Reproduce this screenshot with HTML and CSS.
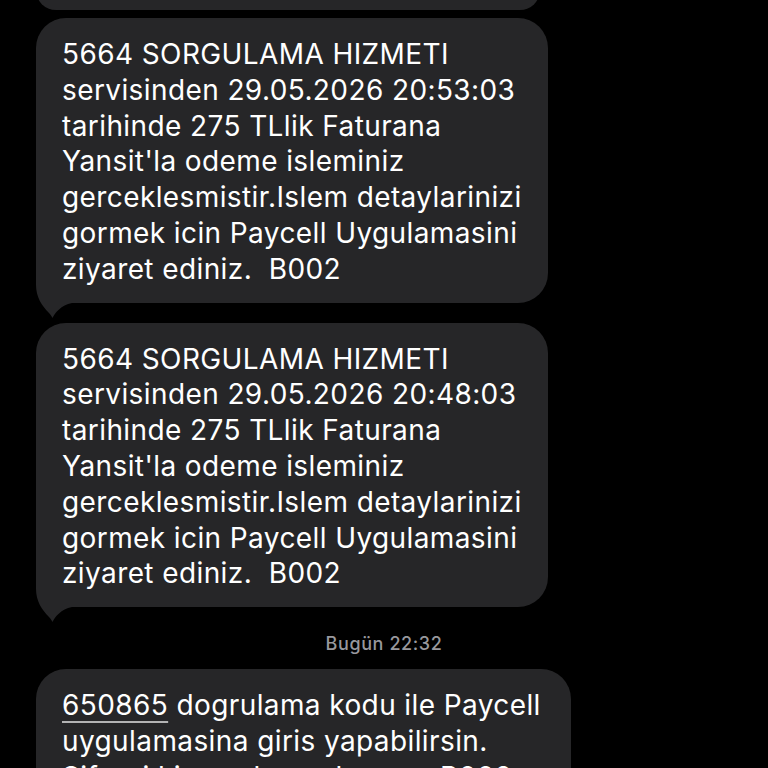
FILE: index.html
```html
<!DOCTYPE html>
<html lang="tr">
<head>
<meta charset="utf-8">
<title>Mesajlar</title>
<link rel="stylesheet" href="styles.css">
</head>
<body>
<main class="thread">
  <div class="bubble partial"></div>

  <div class="bubble first">
    <svg class="tail" width="40" height="46" viewBox="0 0 40 46"><path d="M0 0 L0 12 C0 24 6 33 13 40 C15 42 16 44 16.5 45 C19 40 25 32 36 30 L40 30 L40 0 Z" fill="#262628"/></svg>
    <p class="text">5664 SORGULAMA HIZMETI<br>servisinden 29.05.2026 20:53:03<br>tarihinde 275 TLlik Faturana<br>Yansit'la odeme isleminiz<br>gerceklesmistir.Islem detaylarinizi<br>gormek icin Paycell Uygulamasini<br>ziyaret ediniz.&nbsp; B002</p>
  </div>

  <div class="bubble second">
    <svg class="tail" width="40" height="46" viewBox="0 0 40 46"><path d="M0 0 L0 12 C0 24 6 33 13 40 C15 42 16 44 16.5 45 C19 40 25 32 36 30 L40 30 L40 0 Z" fill="#262628"/></svg>
    <p class="text">5664 SORGULAMA HIZMETI<br>servisinden 29.05.2026 20:48:03<br>tarihinde 275 TLlik Faturana<br>Yansit'la odeme isleminiz<br>gerceklesmistir.Islem detaylarinizi<br>gormek icin Paycell Uygulamasini<br>ziyaret ediniz.&nbsp; B002</p>
  </div>

  <div class="stamp">Bugün 22:32</div>

  <div class="bubble third">
    <p class="text"><span class="code">650865</span> dogrulama kodu ile Paycell<br>uygulamasina giris yapabilirsin.<br>Sifreni kimseyle paylasma.&nbsp; B002</p>
  </div>
</main>
</body>
</html>
```

FILE: styles.css
```css
html, body {
  margin: 0;
  padding: 0;
  background: #000;
  height: 768px;
  overflow: hidden;
}

.thread {
  display: flex;
  flex-direction: column;
  align-items: flex-start;
  font-family: Inter, "Noto Sans", "Liberation Sans", sans-serif;
}

.bubble {
  position: relative;
  margin-left: 36px;
  background: #262628;
  color: #fff;
  border-radius: 30px;
  padding: 19px 26px 15px 26px;
}

.partial {
  width: 504px;
  height: 40px;
  padding: 0;
  margin-top: -30px;
}

.first {
  margin-top: 8px;
}

.second {
  margin-top: 20px;
}

.third {
  padding-right: 30px;
}

.text {
  position: relative;
  margin: 0;
  font-size: 28px;
  line-height: 35.8px;
  letter-spacing: 0.4px;
  white-space: nowrap;
}

.tail {
  position: absolute;
  left: 0;
  bottom: -16px;
  display: block;
}

.stamp {
  align-self: stretch;
  text-align: center;
  margin: 27px 0 15px;
  font-size: 18px;
  line-height: 20px;
  font-weight: 500;
  letter-spacing: 0.6px;
  color: #98989d;
}

.code {
  text-decoration: underline;
  text-decoration-thickness: 1.5px;
  text-underline-offset: 6px;
  text-decoration-color: rgba(255, 255, 255, 0.65);
}
```
